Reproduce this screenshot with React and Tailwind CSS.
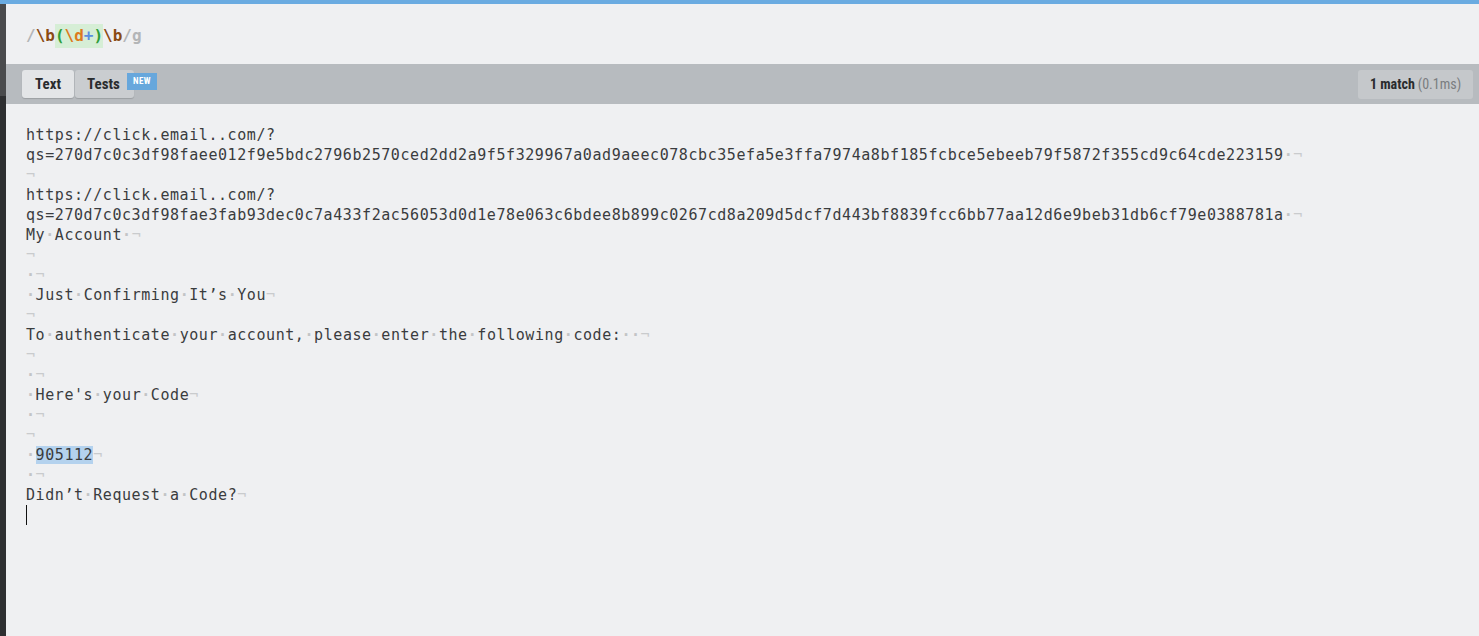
import React from "react";

const mono = { fontFamily: '"DejaVu Sans Mono", "Liberation Mono", monospace' };

function Dot() {
  return <span className="text-[#c2c4c6] font-bold">·</span>;
}
function Nl() {
  return <span className="text-[#c9cbcd]">¬</span>;
}

function Line({ text = "", nl = true, hl }) {
  const parts = [];
  const chars = text.split(" ");
  chars.forEach((seg, i) => {
    if (i > 0) parts.push(<Dot key={"d" + i} />);
    if (seg) {
      if (hl && seg === hl) {
        parts.push(
          <span key={"s" + i} className="bg-[#b4d2ee]">
            {seg}
          </span>
        );
      } else {
        parts.push(<span key={"s" + i}>{seg}</span>);
      }
    }
  });
  return (
    <div className="h-[20px] whitespace-pre">
      {parts}
      {nl && <Nl />}
    </div>
  );
}

export default function App() {
  const lines = [
    { t: "https://click.email..com/?", nl: false },
    { t: "qs=270d7c0c3df98faee012f9e5bdc2796b2570ced2dd2a9f5f329967a0ad9aeec078cbc35efa5e3ffa7974a8bf185fcbce5ebeeb79f5872f355cd9c64cde223159 " },
    { t: "" },
    { t: "https://click.email..com/?", nl: false },
    { t: "qs=270d7c0c3df98fae3fab93dec0c7a433f2ac56053d0d1e78e063c6bdee8b899c0267cd8a209d5dcf7d443bf8839fcc6bb77aa12d6e9beb31db6cf79e0388781a " },
    { t: "My Account " },
    { t: "" },
    { t: " " },
    { t: " Just Confirming It’s You" },
    { t: "" },
    { t: "To authenticate your account, please enter the following code:  " },
    { t: "" },
    { t: " " },
    { t: " Here's your Code" },
    { t: " " },
    { t: "" },
    { t: " 905112", hl: "905112" },
    { t: " " },
    { t: "Didn’t Request a Code?" },
  ];

  return (
    <div className="flex h-[636px] w-[1479px] flex-col overflow-hidden bg-[#eff0f2]">
      <div className="h-[4px] shrink-0 bg-[#6aabe1]" />
      <div className="flex flex-1">
        <div className="flex w-[6px] shrink-0 flex-col">
          <div className="h-[92px] bg-[#4a4b4d]" />
          <div className="flex-1 bg-[#2e2f31]" />
        </div>
        <div className="flex flex-1 flex-col">
          <div
            className="flex h-[60px] items-center pl-[20px] pt-[3px] text-[16px] font-bold"
            style={mono}
          >
            <span className="text-[#b3b5b7]">/</span>
            <span className="text-[#8a4b14]">\b</span>
            <span className="bg-[#d6eed6]">
              <span className="text-[#2e9e3a]">(</span>
              <span className="text-[#dd7a1c]">\d</span>
              <span className="text-[#5b8de0]">+</span>
              <span className="text-[#2e9e3a]">)</span>
            </span>
            <span className="text-[#8a4b14]">\b</span>
            <span className="text-[#b3b5b7]">/g</span>
          </div>
          <div
            className="flex h-[40px] items-center justify-between bg-[#b7bbbf] pl-[16px] pr-[6px]"
            style={{ fontFamily: '"Roboto Condensed", "Liberation Sans Narrow", Roboto, sans-serif' }}
          >
            <div className="flex items-center">
              <div className="flex h-[28px] w-[52px] items-center justify-center rounded-[3px] bg-[#e3e5e7] text-[15px] font-bold text-[#2a2c2e] shadow-[0_1px_1px_rgba(0,0,0,0.15)]">
                Text
              </div>
              <div className="relative ml-[1px] flex h-[28px] w-[59px] items-center rounded-[3px] bg-[#cacdd0] pl-[12px] text-[15px] font-bold text-[#2a2c2e] shadow-[0_1px_1px_rgba(0,0,0,0.15)]">
                Tests
                <span className="absolute left-[52px] top-[3px] flex h-[17px] w-[30px] items-center justify-center bg-[#67a7dc] text-[9px] font-bold tracking-[0.5px] text-white">
                  NEW
                </span>
              </div>
            </div>
            <div className="flex h-[29px] w-[115px] items-center justify-center rounded-[3px] bg-[#c5c8cb] text-[14px]">
              <span className="font-bold text-[#2a2c2e]">1 match</span>
              <span className="ml-[3px] text-[#7a7d80]">(0.1ms)</span>
            </div>
          </div>
          <div
            className="pl-[20px] pt-[21px] text-[15px] leading-[20px] tracking-[0.57px] text-[#3a3c3e]"
            style={mono}
          >
            {lines.map((l, i) => (
              <Line key={i} text={l.t} nl={l.nl !== false} hl={l.hl} />
            ))}
            <div className="h-[20px]">
              <span className="inline-block h-[20px] w-[1px] bg-[#111]" />
            </div>
          </div>
        </div>
      </div>
    </div>
  );
}
